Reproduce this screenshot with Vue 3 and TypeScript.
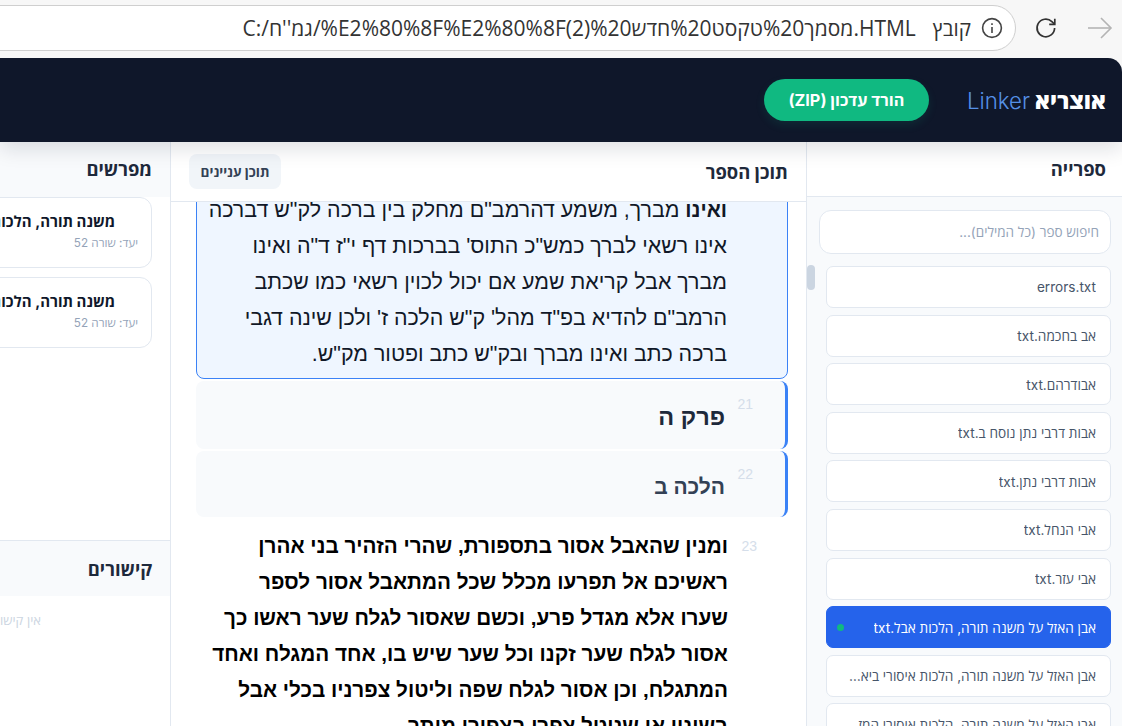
<template>
  <div class="page">
    <div class="browser-bar">
      <div class="omnibox">
        <div class="url">
          <bdi v-for="(part, i) in urlParts" :key="i">{{ part }}</bdi>
        </div>
        <span class="scheme">קובץ</span>
        <svg class="info" width="22" height="22" viewBox="0 0 22 22" fill="none" stroke="#444" stroke-width="1.6">
          <circle cx="11" cy="11" r="9.4" />
          <path d="M11 10v6" />
          <path d="M11 6.2v1.8" />
        </svg>
      </div>
      <svg class="nav-icon" width="24" height="24" viewBox="0 0 24 24" fill="none" stroke="#333" stroke-width="1.7">
        <path d="M20.6 12a8.8 8.8 0 1 1-2.7-6.4l2.5 2.4" />
        <path d="M20.8 2.8v5.6h-5.6" />
      </svg>
      <svg class="nav-icon forward" width="26" height="24" viewBox="0 0 26 24" fill="none" stroke="#b4b4b4" stroke-width="1.6">
        <path d="M1 12h23" />
        <path d="M14 2l10 10-10 10" />
      </svg>
    </div>

    <div class="app" dir="rtl">
      <header class="topbar">
        <div class="logo"><strong>אוצריא</strong> <span>Linker</span></div>
        <button class="zip-btn">הורד עדכון (ZIP)</button>
      </header>

      <main class="panels">
        <aside class="library">
          <div class="panel-head">ספרייה</div>
          <div class="library-body">
            <div class="search">חיפוש ספר (כל המילים)...</div>
            <ul class="book-list">
              <li v-for="book in books" :key="book.name" class="book" :class="{ active: book.active }">
                <span class="book-name">{{ book.name }}</span>
                <i v-if="book.active" class="dot"></i>
              </li>
            </ul>
            <div class="thumb"></div>
          </div>
        </aside>

        <section class="reader">
          <div class="reader-head">
            <span>תוכן הספר</span>
            <button class="toc-btn">תוכן עניינים</button>
          </div>
          <div class="reader-body">
            <article class="para current">
              <p v-for="(line, i) in currentLines" :key="i"><b v-if="i === 0">ואינו </b>{{ line }}</p>
            </article>
            <div class="heading h-chapter"><em>21</em><h2>פרק ה</h2></div>
            <div class="heading h-law"><em>22</em><h3>הלכה ב</h3></div>
            <article class="para strong">
              <em>23</em>
              <p v-for="(line, i) in boldLines" :key="i">{{ line }}</p>
            </article>
          </div>
        </section>

        <aside class="side">
          <div class="panel-head">מפרשים</div>
          <div class="cards">
            <div v-for="n in 2" :key="n" class="card">
              <div class="card-title">משנה תורה, הלכות אבל</div>
              <div class="card-sub">יעד: שורה 52</div>
            </div>
          </div>
          <div class="links-head">קישורים</div>
          <div class="links-empty">אין קישורים להצגה</div>
        </aside>
      </main>
    </div>
  </div>
</template>

<script setup lang="ts">
interface Book {
  name: string
  active?: boolean
}

const urlParts: string[] = [
  'C:/',
  "גמ''ח",
  '/%E2%80%8F%E2%80%8F(2)%20',
  'חדש',
  '%20',
  'טקסט',
  '%20',
  'מסמך',
  '.HTML'
]

const books: Book[] = [
  { name: 'errors.txt' },
  { name: 'אב בחכמה.txt' },
  { name: 'אבודרהם.txt' },
  { name: 'אבות דרבי נתן נוסח ב.txt' },
  { name: 'אבות דרבי נתן.txt' },
  { name: 'אבי הנחל.txt' },
  { name: 'אבי עזר.txt' },
  { name: 'אבן האזל על משנה תורה, הלכות אבל.txt', active: true },
  { name: 'אבן האזל על משנה תורה, הלכות איסורי ביאה.txt' },
  { name: 'אבן האזל על משנה תורה, הלכות איסורי המזבח.txt' }
]

const currentLines: string[] = [
  'מברך, משמע דהרמב"ם מחלק בין ברכה לק"ש דברכה',
  'אינו רשאי לברך כמש"כ התוס\' בברכות דף י"ז ד"ה ואינו',
  'מברך אבל קריאת שמע אם יכול לכוין רשאי כמו שכתב',
  'הרמב"ם להדיא בפ"ד מהל\' ק"ש הלכה ז\' ולכן שינה דגבי',
  'ברכה כתב ואינו מברך ובק"ש כתב ופטור מק"ש.'
]

const boldLines: string[] = [
  'ומנין שהאבל אסור בתספורת, שהרי הזהיר בני אהרן',
  'ראשיכם אל תפרעו מכלל שכל המתאבל אסור לספר',
  'שערו אלא מגדל פרע, וכשם שאסור לגלח שער ראשו כך',
  'אסור לגלח שער זקנו וכל שער שיש בו, אחד המגלח ואחד',
  'המתגלח, וכן אסור לגלח שפה וליטול צפרניו בכלי אבל',
  'בשיניו או שנוטל צפרו בצפורן מותר'
]
</script>

<style>
html,
body {
  margin: 0;
  overflow: hidden;
}
</style>

<style scoped>
.page {
  width: 1122px;
  height: 726px;
  overflow: hidden;
  display: flex;
  flex-direction: column;
  background: #f7f7f7;
  font-family: "Inter", "Open Sans", "Liberation Sans", sans-serif;
}

.browser-bar {
  height: 58px;
  flex-shrink: 0;
  display: flex;
  align-items: flex-start;
  justify-content: flex-end;
  font-family: "Open Sans", sans-serif;
}

.omnibox {
  width: 1040px;
  height: 46px;
  margin-top: 5px;
  flex-shrink: 0;
  box-sizing: border-box;
  background: #fff;
  border: 1.5px solid #cfcfcf;
  border-radius: 24px;
  display: flex;
  align-items: center;
  justify-content: flex-end;
  padding-right: 12px;
  color: #333;
  font-size: 21px;
}

.url {
  white-space: nowrap;
}

.scheme {
  margin-left: 17px;
  font-size: 20.6px;
}

.info {
  margin-left: 10px;
}

.nav-icon {
  margin: 16px 0 0 18px;
  flex-shrink: 0;
}

.forward {
  margin-left: 29px;
  margin-right: 9px;
}

.app {
  flex: 1;
  min-height: 0;
  display: flex;
  flex-direction: column;
  background: #fff;
  border-radius: 0 14px 0 0;
  overflow: hidden;
}

.topbar {
  height: 84px;
  flex-shrink: 0;
  background: #0f172a;
  display: flex;
  align-items: center;
  gap: 38px;
  padding-right: 16px;
  box-shadow: 0 6px 20px rgba(15, 23, 42, 0.14);
  position: relative;
  z-index: 2;
}

.logo {
  color: #5590e6;
  font-size: 22.3px;
  font-weight: 300;
  word-spacing: -1.5px;
  white-space: nowrap;
}

.logo strong {
  color: #fff;
  font-size: 22.5px;
  font-weight: 800;
}

.zip-btn {
  width: 165px;
  height: 42px;
  padding: 0;
  border: 0;
  border-radius: 21px;
  background: #10b981;
  color: #fff;
  font: 700 16.2px "Inter", "Open Sans", sans-serif;
  box-shadow: 0 4px 10px rgba(16, 185, 129, 0.12);
}

.panels {
  flex: 1;
  min-height: 0;
  display: flex;
}

.library {
  width: 316px;
  flex-shrink: 0;
  box-sizing: border-box;
  border-left: 1px solid #e2e8f0;
  background: #f8fafc;
  display: flex;
  flex-direction: column;
}

.panel-head {
  height: 55px;
  flex-shrink: 0;
  box-sizing: border-box;
  border-bottom: 1px solid #e2e8f0;
  background: #fff;
  display: flex;
  align-items: center;
  padding: 0 16px 2px;
  color: #1e293b;
  font-size: 18.4px;
  font-weight: 700;
}

.library-body {
  flex: 1;
  min-height: 0;
  position: relative;
  overflow: hidden;
  padding: 13px 11px 0 12px;
}

.search {
  height: 44px;
  box-sizing: border-box;
  border: 1px solid #e2e8f0;
  border-radius: 12px;
  background: #fff;
  display: flex;
  align-items: center;
  padding: 0 11px;
  color: #94a3b8;
  font-size: 13.5px;
}

.book-list {
  list-style: none;
  margin: 12px 0 0 0;
  margin-inline-end: 7px;
  padding: 0;
  display: flex;
  flex-direction: column;
  gap: 6.6px;
}

.book {
  height: 42px;
  flex-shrink: 0;
  box-sizing: border-box;
  border: 1px solid #e2e8f0;
  border-radius: 7px;
  background: #fff;
  display: flex;
  align-items: center;
  justify-content: space-between;
  padding: 0 14px 0 17px;
  color: #475569;
  font-size: 13.6px;
}

.book.active {
  background: #2563eb;
  border-color: #2563eb;
  color: #fff;
  padding-left: 10px;
}

.book-name {
  overflow: hidden;
  white-space: nowrap;
  text-overflow: ellipsis;
}

.dot {
  width: 7px;
  height: 7px;
  border-radius: 50%;
  background: #10b981;
  flex-shrink: 0;
}

.thumb {
  position: absolute;
  left: 0;
  top: 68px;
  width: 8px;
  height: 25px;
  border-radius: 4px;
  background: #cbd5e1;
}

.reader {
  width: 636px;
  flex-shrink: 0;
  box-sizing: border-box;
  border-left: 1px solid #e2e8f0;
  background: #fff;
  display: flex;
  flex-direction: column;
  min-height: 0;
}

.reader-head {
  height: 60px;
  flex-shrink: 0;
  box-sizing: border-box;
  border-bottom: 1px solid #e2e8f0;
  display: flex;
  align-items: center;
  justify-content: space-between;
  padding: 0 18px;
  color: #1e293b;
  font-size: 18.4px;
  font-weight: 700;
}

.toc-btn {
  width: 92px;
  height: 35px;
  padding: 0;
  border: 0;
  border-radius: 8px;
  background: #f1f5f9;
  color: #334155;
  font: 700 13.6px "Inter", "Open Sans", sans-serif;
}

.reader-body {
  flex: 1;
  min-height: 0;
  overflow: hidden;
  padding: 0 18px 0 25px;
}

.para {
  position: relative;
  box-sizing: border-box;
  padding-right: 60px;
  color: #111827;
  font-family: "Liberation Sans", sans-serif;
  font-size: 21.4px;
  line-height: 36px;
}

.para p {
  margin: 0;
  white-space: nowrap;
}

.para em,
.heading em {
  font-style: normal;
  font-family: "Liberation Sans", sans-serif;
  font-size: 14px;
  color: #d5deea;
  font-weight: 400;
}

.para em {
  position: absolute;
  right: 31px;
  top: 6px;
  line-height: 24px;
}

.current {
  margin-top: -11px;
  height: 188px;
  background: #eff6ff;
  border: 1px solid #3b82f6;
  border-radius: 8px;
}

.current b {
  font-size: 20.7px;
}

.heading {
  box-sizing: border-box;
  margin-top: 2px;
  border-right: 3px solid #3b82f6;
  border-radius: 8px;
  background: #f8fafc;
  display: flex;
  align-items: flex-start;
  color: #1e293b;
  font-family: "Liberation Sans", sans-serif;
}

.heading em {
  width: 24px;
  margin: 15px 32px 0 0;
  text-align: right;
}

.heading h2,
.heading h3 {
  margin: 0 4px 0 0;
  line-height: 1;
}

.h-chapter {
  height: 68px;
}

.h-chapter h2 {
  margin-top: 25px;
  font-size: 23.5px;
}

.h-law {
  height: 66px;
}

.h-law h3 {
  margin-top: 25px;
  font-size: 21px;
  color: #334155;
}

.strong {
  margin-top: 11px;
  font-size: 20.7px;
  font-weight: 700;
  color: #000;
}

.side {
  width: 320px;
  flex-shrink: 0;
  background: #fff;
  display: flex;
  flex-direction: column;
  min-height: 0;
}

.side .panel-head {
  background: #f8fafc;
  border-bottom: 0;
  padding: 0 18px 2px;
}

.cards {
  height: 344px;
  flex-shrink: 0;
  box-sizing: border-box;
  border-bottom: 1px solid #e2e8f0;
  padding-right: 18px;
  display: flex;
  flex-direction: column;
  gap: 9px;
}

.card {
  height: 71px;
  flex-shrink: 0;
  box-sizing: border-box;
  border: 1px solid #e2e8f0;
  border-radius: 12px;
  background: #fff;
  padding: 13px 13px;
}

.card-title {
  margin-right: 23px;
  color: #0f172a;
  font-size: 15px;
  font-weight: 700;
  line-height: 22px;
  white-space: nowrap;
}

.card-sub {
  margin-top: 2px;
  color: #94a3b8;
  font-size: 11.7px;
  line-height: 17px;
}

.links-head {
  height: 55px;
  flex-shrink: 0;
  background: #f8fafc;
  display: flex;
  align-items: center;
  padding: 0 18px;
  color: #1e293b;
  font-size: 18.4px;
  font-weight: 700;
}

.links-empty {
  padding: 15px 129px 0 0;
  color: #cbd5e1;
  font-size: 13px;
  white-space: nowrap;
}
</style>
